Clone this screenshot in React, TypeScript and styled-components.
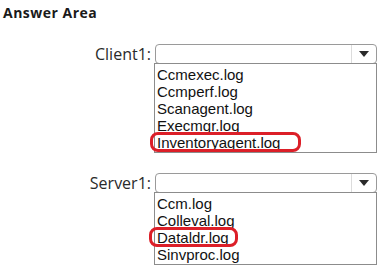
import styled, { createGlobalStyle } from "styled-components";

const GlobalStyle = createGlobalStyle`
  html, body {
    margin: 0;
    padding: 0;
    background: #ffffff;
  }
`;

type Option = {
  name: string;
  marked?: boolean;
  boxWidth?: number;
  boxLeft?: number;
};

const fields: { label: string; options: Option[] }[] = [
  {
    label: "Client1:",
    options: [
      { name: "Ccmexec.log" },
      { name: "Ccmperf.log" },
      { name: "Scanagent.log" },
      { name: "Execmgr.log" },
      { name: "Inventoryagent.log", marked: true, boxWidth: 151, boxLeft: -7 },
    ],
  },
  {
    label: "Server1:",
    options: [
      { name: "Ccm.log" },
      { name: "Colleval.log" },
      { name: "Dataldr.log", marked: true, boxWidth: 89, boxLeft: -8 },
      { name: "Sinvproc.log" },
    ],
  },
];

export default function App() {
  return (
    <>
      <GlobalStyle />
      <Page>
        <Title>Answer Area</Title>
        {fields.map((f) => (
          <Field key={f.label}>
            <Label>{f.label}</Label>
            <Control>
              <Select>
                <Arrow>
                  <svg width="10" height="6" viewBox="0 0 10 6">
                    <path d="M0 0 L10 0 L5 6 Z" fill="#2b2b2b" />
                  </svg>
                </Arrow>
              </Select>
              <ListBox>
                {f.options.map((o) => (
                  <Item
                    key={o.name}
                    $marked={!!o.marked}
                    $boxWidth={o.boxWidth ?? 0}
                    $boxLeft={o.boxLeft ?? 0}
                  >
                    {o.name}
                  </Item>
                ))}
              </ListBox>
            </Control>
          </Field>
        ))}
      </Page>
    </>
  );
}

const Page = styled.div`
  width: 381px;
  height: 271px;
  padding: 4px 0 0 3px;
  box-sizing: border-box;
  overflow: hidden;
`;

const Title = styled.div`
  font-family: "Open Sans", "Noto Sans", sans-serif;
  font-weight: 700;
  font-size: 14px;
  letter-spacing: 0.5px;
  line-height: 18px;
  color: #1a1a1a;
`;

const Field = styled.div`
  display: flex;
  gap: 4px;
  margin-top: 22px;

  & + & {
    margin-top: 20px;
  }
`;

const Label = styled.div`
  width: 148px;
  text-align: right;
  font-family: "Open Sans", "Noto Sans", sans-serif;
  font-size: 16px;
  line-height: 20px;
  color: #2a2a2a;
`;

const Control = styled.div`
  display: flex;
  flex-direction: column;
  width: 222px;
`;

const Select = styled.div`
  height: 20px;
  box-sizing: border-box;
  border: 1px solid #9a9a9a;
  border-radius: 4px;
  background: #ffffff;
  display: flex;
  justify-content: flex-end;
`;

const Arrow = styled.div`
  width: 24px;
  border-left: 1px solid #dcdcdc;
  display: flex;
  align-items: center;
  justify-content: center;
`;

const ListBox = styled.div`
  margin: -1px 0 0 -1px;
  width: 223px;
  box-sizing: border-box;
  border: 1px solid #8c8c8c;
  padding: 2px 0 1px 2px;
  background: #ffffff;
`;

const Item = styled.div<{ $marked: boolean; $boxWidth: number; $boxLeft: number }>`
  position: relative;
  height: 17px;
  line-height: 17px;
  font-family: "Liberation Sans", Arial, sans-serif;
  font-size: 15px;
  color: #111111;
  white-space: nowrap;

  &::after {
    content: "";
    display: ${(p) => (p.$marked ? "block" : "none")};
    position: absolute;
    left: ${(p) => p.$boxLeft}px;
    top: -2px;
    width: ${(p) => p.$boxWidth}px;
    height: 20px;
    box-sizing: border-box;
    border: 3px solid #dc1f28;
    border-radius: 8px;
  }
`;
